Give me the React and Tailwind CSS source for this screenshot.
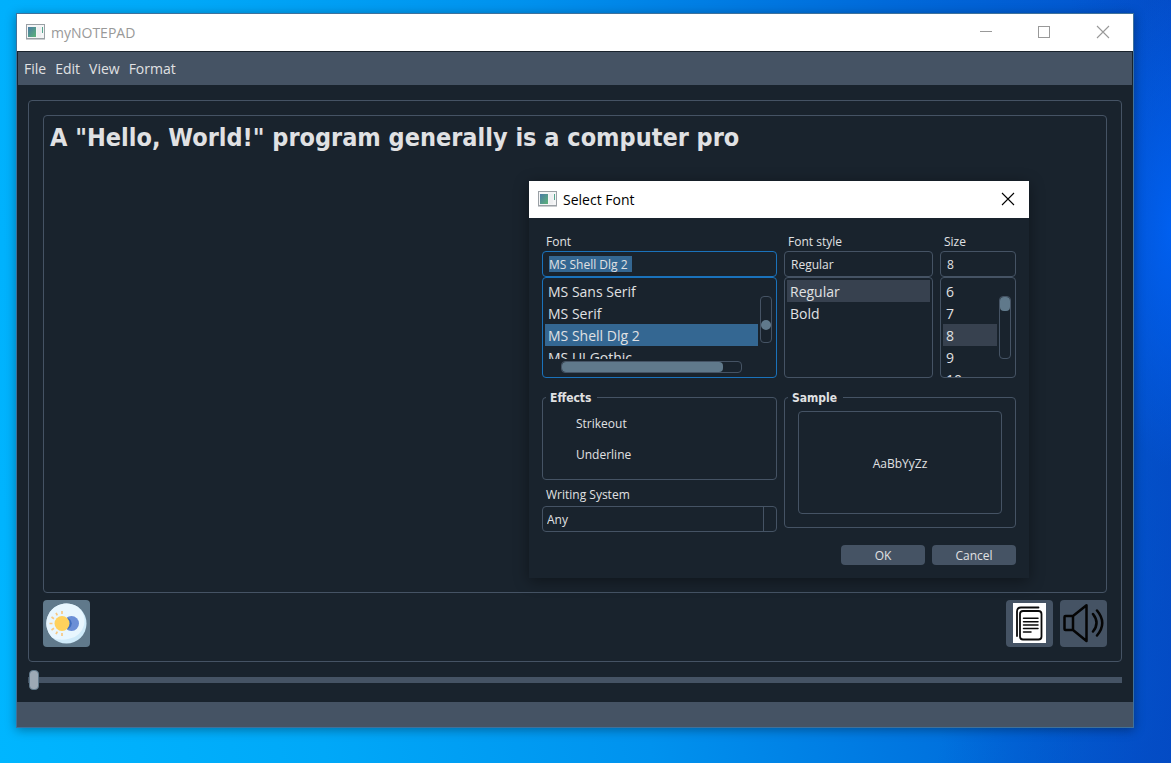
import React from "react";

const UI = "font-['Open_Sans','Noto_Sans',sans-serif]";

function AppIcon() {
  return (
    <svg width="19" height="16" viewBox="0 0 19 16" aria-hidden="true">
      <defs>
        <linearGradient id="appIconFill" x1="0" y1="0" x2="1" y2="1">
          <stop offset="0" stopColor="#4a7ba6" />
          <stop offset="1" stopColor="#5cb377" />
        </linearGradient>
      </defs>
      <rect x="0.5" y="0.5" width="18" height="14" fill="#f4f5f6" stroke="#9aa0a5" />
      <rect x="0" y="15" width="19" height="1" fill="#c9cccf" />
      <rect x="2" y="3" width="8" height="10" fill="url(#appIconFill)" />
      <rect x="11" y="3" width="4" height="10" fill="#eeeff1" />
      <rect x="16" y="3" width="1" height="6" fill="#55a58e" />
    </svg>
  );
}

function CloseGlyph() {
  return (
    <svg width="14" height="14" viewBox="0 0 14 14" aria-hidden="true">
      <path d="M1 1 L13 13 M13 1 L1 13" stroke="currentColor" strokeWidth="1.1" fill="none" />
    </svg>
  );
}

function DayNightIcon() {
  return (
    <svg width="41" height="41" viewBox="0 0 41 41" aria-hidden="true">
      <circle cx="20.5" cy="20.5" r="20" fill="#cfeaf9" />
      <path d="M18 .6 A20 20 0 0 0 6 34.5 Q14 38.5 24 35.5 A18 18 0 0 0 32 4 A20 20 0 0 0 18 .6" fill="#e8f6fe" />
      <circle cx="25.5" cy="20.5" r="7.5" fill="#6b8fd6" />
      <path d="M21 14.5 A7.5 7.5 0 0 1 25.8 20.5 A7.5 7.5 0 0 1 21 26.5 Z" fill="#3f6dc0" />
      <circle cx="16" cy="20.5" r="7.5" fill="#ffd15c" />
      <path
        d="M16 8 V11 M10 9.8 L11.3 12.3 M5.5 14 L8 15.7 M3.5 20.5 H6.5 M5.5 27 L8 25.3 M10 31.2 L11.3 28.7 M16 33 V30"
        stroke="#f8c882"
        strokeWidth="1.7"
      />
    </svg>
  );
}

function PagesIcon() {
  return (
    <svg width="33" height="41" viewBox="0 0 33 41" fill="none" stroke="#0a0a0a" strokeLinecap="round" aria-hidden="true">
      <rect width="33" height="40" fill="#fff" stroke="none" />
      <path d="M25.5 4.5 H8 Q4 4.5 4 8.5 V33" strokeWidth="1.8" />
      <rect x="7" y="8" width="21.5" height="28.5" rx="3" strokeWidth="1.8" />
      <path d="M10.5 15.3 H25 M10.5 18.7 H25 M10.5 22 H25 M10.5 25.4 H25 M10.5 29 H18" strokeWidth="1.5" />
    </svg>
  );
}

function SpeakerIcon() {
  return (
    <svg width="41" height="41" viewBox="0 0 41 41" fill="none" stroke="#050505" strokeWidth="2.5" strokeLinejoin="round" strokeLinecap="round" aria-hidden="true">
      <rect x="1.5" y="13" width="8.5" height="14" rx="1" />
      <path d="M10 13 L23.5 2.3 V38 L10 27" />
      <path d="M30 11 Q37 20 30 28.5 M34 7.5 Q44.5 20 34 32.5" />
    </svg>
  );
}

function ListItem({ children, className = "" }) {
  return <li className={`h-[22px] shrink-0 whitespace-nowrap pl-[3px] text-sm leading-6 ${className}`}>{children}</li>;
}

function Field({ id, label, value }) {
  return (
    <>
      <label htmlFor={id} className="pl-1 pt-0.5 text-xs leading-[18px]">
        {label}
      </label>
      <input
        id={id}
        defaultValue={value}
        className="h-[26px] w-full min-w-0 rounded border border-[#455364] bg-transparent px-1.5 text-xs outline-none"
      />
    </>
  );
}

function Group({ title, className = "", children }) {
  return (
    <fieldset className={`min-w-0 rounded border border-[#455364] ${className}`}>
      <legend className="ml-[3px] pl-1 pr-1.5 pt-0.5 font-['DejaVu_Sans_Condensed','Noto_Sans',sans-serif] text-xs font-bold leading-3">{title}</legend>
      {children}
    </fieldset>
  );
}

function FontDialog() {
  return (
    <section
      role="dialog"
      aria-label="Select Font"
      className="absolute left-[529px] top-[181px] w-[500px] bg-[#19232d] text-[#e0e1e3] shadow-[0_3px_14px_rgba(0,0,0,0.4)]"
    >
      <header className="flex h-[37px] items-center bg-white pb-0.5 pl-[9px] pr-3.5 text-black">
        <AppIcon />
        <h2 className="ml-1.5 flex-1 pt-0.5 text-sm">Select Font</h2>
        <button aria-label="Close dialog">
          <CloseGlyph />
        </button>
      </header>

      <div className="p-[13px]">
        <div className="grid grid-cols-[235fr_149fr_76fr] gap-[7px]">
          <div className="flex min-w-0 flex-col">
            <label htmlFor="font" className="pl-1 pt-0.5 text-xs leading-[18px]">
              Font
            </label>
            <div className="flex h-[26px] items-center rounded border border-[#1a72bb] px-1.5">
              <input
                id="font"
                defaultValue="MS Shell Dlg 2"
                className="h-4 w-[83px] bg-[#346792] pt-0.5 text-xs outline-none"
              />
            </div>
            <div className="flex h-[101px] rounded border border-[#1a72bb] px-0.5 pt-0.5">
              <div className="flex min-w-0 flex-1 flex-col">
                <ul className="flex h-[79px] flex-col overflow-hidden">
                  <ListItem>MS Sans Serif</ListItem>
                  <ListItem>MS Serif</ListItem>
                  <ListItem className="bg-[#346792]">MS Shell Dlg 2</ListItem>
                  <ListItem>MS UI Gothic</ListItem>
                </ul>
                <div className="mx-4 mt-0.5 flex h-3 shrink-0 rounded border border-[#455364]">
                  <div className="w-[90%] rounded bg-[#60798b]" />
                </div>
              </div>
              <div className="mx-0.5 mt-4 flex h-[47px] w-3 flex-col justify-center rounded border border-[#455364]">
                <div className="mt-2.5 h-2.5 rounded-full bg-[#60798b]" />
              </div>
            </div>
          </div>

          <div className="flex min-w-0 flex-col">
            <Field id="style" label="Font style" value="Regular" />
            <ul className="flex h-[101px] flex-col rounded border border-[#455364] px-0.5 pt-0.5">
              <ListItem className="bg-[#37414f]">Regular</ListItem>
              <ListItem>Bold</ListItem>
            </ul>
          </div>

          <div className="flex min-w-0 flex-col">
            <Field id="size" label="Size" value="8" />
            <div className="flex h-[101px] rounded border border-[#455364] px-0.5 pt-0.5">
              <ul className="flex flex-1 flex-col overflow-hidden">
                <ListItem>6</ListItem>
                <ListItem>7</ListItem>
                <ListItem className="bg-[#37414f]">8</ListItem>
                <ListItem>9</ListItem>
                <ListItem>10</ListItem>
              </ul>
              <div className="mx-0.5 mt-4 flex h-[63px] w-3 flex-col rounded border border-[#455364]">
                <div className="h-3.5 rounded bg-[#60798b]" />
              </div>
            </div>
          </div>
        </div>

        <div className="mt-3 grid grid-cols-[235fr_232fr] gap-[7px]">
          <div className="flex min-w-0 flex-col">
            <Group title="Effects" className="h-[90px]">
              <div className="flex flex-col gap-[11px] pl-[33px] pt-2.5 text-xs leading-5">
                <label>
                  <input type="checkbox" className="sr-only" />
                  Strikeout
                </label>
                <label>
                  <input type="checkbox" className="sr-only" />
                  Underline
                </label>
              </div>
            </Group>
            <label htmlFor="writing" className="mt-[5px] pl-1 text-xs leading-5">
              Writing System
            </label>
            <div className="mt-px flex h-[26px] rounded border border-[#455364]">
              <select id="writing" className="flex-1 appearance-none border-r border-[#455364] bg-transparent pl-1 pt-0.5 text-xs outline-none">
                <option>Any</option>
              </select>
              <div className="w-3" />
            </div>
          </div>
          <Group title="Sample" className="h-[138px]">
            <output className="mx-[13px] mt-[7px] flex h-[103px] items-center justify-center rounded border border-[#455364] pt-0.5 text-xs">
              AaBbYyZz
            </output>
          </Group>
        </div>

        <div className="mt-[13px] flex justify-end gap-[7px] text-xs">
          <button className="h-5 w-[84px] rounded bg-[#455364] pt-0.5">OK</button>
          <button className="h-5 w-[84px] rounded bg-[#455364] pt-0.5">Cancel</button>
        </div>
      </div>
    </section>
  );
}

export default function App() {
  return (
    <div
      className={`relative flex min-h-screen bg-[radial-gradient(ellipse_70px_240px_at_100%_30%,#0060f0_0%,transparent_100%),linear-gradient(100deg,transparent_82%,#0446c0_105%),linear-gradient(80deg,#00b6ff_0%,#00a8f8_25%,#0092ee_50%,#006ada_78%,#0350cc_100%)] pb-[35px] pl-4 pr-[37px] pt-[13px] ${UI}`}
    >
      <main className="flex min-w-0 flex-1 flex-col border border-[#3f719b] bg-[#19232d] text-[#e0e1e3] shadow-[0_2px_10px_rgba(0,0,0,0.35)]">
        <header className="flex h-[37px] items-center bg-white pb-0.5 pl-[9px] pr-[23px] text-[#999]">
          <AppIcon />
          <h1 className="ml-1.5 flex-1 pt-0.5 text-sm">myNOTEPAD</h1>
          <div className="flex items-center gap-[45px]">
            <button aria-label="Minimize">
              <svg width="14" height="14" viewBox="0 0 14 14" aria-hidden="true">
                <path d="M2 6.5 H14" stroke="currentColor" />
              </svg>
            </button>
            <button aria-label="Maximize">
              <svg width="14" height="14" viewBox="0 0 14 14" aria-hidden="true">
                <rect x="1.5" y="1.5" width="11" height="11" fill="none" stroke="currentColor" />
              </svg>
            </button>
            <button aria-label="Close">
              <CloseGlyph />
            </button>
          </div>
        </header>

        <nav className="mx-px mt-px flex h-[33px] items-center gap-[9px] bg-[#455364] pl-1.5 text-sm">
          <button>File</button>
          <button>Edit</button>
          <button>View</button>
          <button>Format</button>
        </nav>

        <div className="mx-[11px] mt-[15px] flex flex-1 flex-col rounded border border-[#455364] p-3.5">
          <textarea
            aria-label="Document"
            spellCheck={false}
            defaultValue={'A "Hello, World!" program generally is a computer pro'}
            className="flex-1 resize-none rounded border border-[#455364] bg-transparent px-1.5 py-1 font-['DejaVu_Sans_Condensed','Noto_Sans',sans-serif] text-[25px] font-bold leading-9 outline-none"
          />
          <div className="mt-[7px] flex gap-[7px]">
            <button aria-label="Toggle theme" className="flex size-[47px] items-center justify-center rounded bg-[#60798b]">
              <DayNightIcon />
            </button>
            <button aria-label="Copy text" className="ml-auto flex size-[47px] items-center justify-center rounded bg-[#455364]">
              <PagesIcon />
            </button>
            <button aria-label="Read aloud" className="flex size-[47px] items-center justify-center rounded bg-[#455364]">
              <SpeakerIcon />
            </button>
          </div>
        </div>

        <input
          type="range"
          aria-label="Zoom"
          defaultValue={0}
          className="mx-[11px] mb-2.5 mt-1.5 h-6 appearance-none bg-transparent [&::-webkit-slider-runnable-track]:h-1.5 [&::-webkit-slider-runnable-track]:bg-[#455364] [&::-webkit-slider-thumb]:-mt-[7px] [&::-webkit-slider-thumb]:ml-px [&::-webkit-slider-thumb]:h-5 [&::-webkit-slider-thumb]:w-2.5 [&::-webkit-slider-thumb]:appearance-none [&::-webkit-slider-thumb]:rounded [&::-webkit-slider-thumb]:border [&::-webkit-slider-thumb]:border-[#60798b] [&::-webkit-slider-thumb]:bg-[#9da9b5]"
        />
        <footer className="h-[25px] bg-[#455364]" />
      </main>
      <FontDialog />
    </div>
  );
}
